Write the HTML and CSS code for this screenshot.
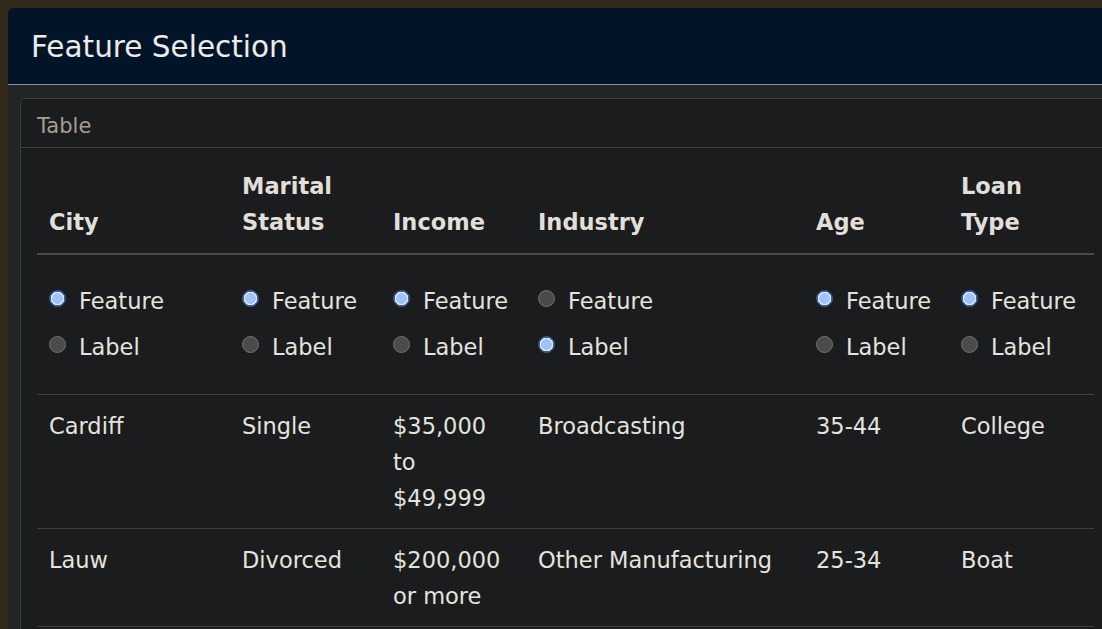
FILE: index.html
```html
<!DOCTYPE html>
<html lang="en">
<head>
<meta charset="utf-8">
<title>Feature Selection</title>
<link rel="stylesheet" href="styles.css">
</head>
<body>
<div class="panel">
  <div class="panel-header"><h1 class="panel-title">Feature Selection</h1></div>
  <div class="panel-body">
    <div class="card">
      <div class="card-header">Table</div>
      <div class="card-body">
        <table class="data-table">
          <colgroup>
            <col class="c-city"><col class="c-marital"><col class="c-income"><col class="c-industry"><col class="c-age"><col class="c-loan">
          </colgroup>
          <thead>
            <tr><th>City</th><th>Marital Status</th><th>Income</th><th>Industry</th><th>Age</th><th>Loan Type</th></tr>
          </thead>
          <tbody>
            <tr class="radio-row">
              <td><div class="opts"><label class="opt"><input type="radio" name="city" checked><span>Feature</span></label><label class="opt"><input type="radio" name="city"><span>Label</span></label></div></td>
              <td><div class="opts"><label class="opt"><input type="radio" name="marital" checked><span>Feature</span></label><label class="opt"><input type="radio" name="marital"><span>Label</span></label></div></td>
              <td><div class="opts"><label class="opt"><input type="radio" name="income" checked><span>Feature</span></label><label class="opt"><input type="radio" name="income"><span>Label</span></label></div></td>
              <td><div class="opts"><label class="opt"><input type="radio" name="industry"><span>Feature</span></label><label class="opt"><input type="radio" name="industry" checked><span>Label</span></label></div></td>
              <td><div class="opts"><label class="opt"><input type="radio" name="age" checked><span>Feature</span></label><label class="opt"><input type="radio" name="age"><span>Label</span></label></div></td>
              <td><div class="opts"><label class="opt"><input type="radio" name="loan" checked><span>Feature</span></label><label class="opt"><input type="radio" name="loan"><span>Label</span></label></div></td>
            </tr>
            <tr>
              <td>Cardiff</td><td>Single</td><td>$35,000 to $49,999</td><td>Broadcasting</td><td>35-44</td><td>College</td>
            </tr>
            <tr>
              <td>Lauw</td><td>Divorced</td><td>$200,000 or more</td><td>Other Manufacturing</td><td>25-34</td><td>Boat</td>
            </tr>
          </tbody>
        </table>
      </div>
    </div>
  </div>
</div>
</body>
</html>
```

FILE: styles.css
```css
html, body {
  margin: 0;
  padding: 0;
}
body {
  background: #33291a;
  overflow: hidden;
  height: 629px;
  padding: 8px 0 0 8px;
  box-sizing: border-box;
  font-family: "DejaVu Sans", "Noto Sans", sans-serif;
  color: #e6e3de;
}
.panel {
  width: 1130px;
  background: #222526;
  border-radius: 6px 6px 0 0;
  overflow: hidden;
  min-height: 700px;
}
.panel-header {
  height: 76px;
  background: #021428;
  border-bottom: 1px solid #8e8e8e;
  display: flex;
  align-items: center;
  padding: 0 23px;
}
.panel-title {
  margin: 0;
  font-size: 29.5px;
  font-weight: 400;
  color: #ecebe8;
  line-height: 1;
  padding-top: 3px;
}
.panel-body {
  padding: 13px 12px;
}
.card {
  width: 1100px;
  border: 1px solid #3a3d3f;
  border-radius: 5px;
  background: #1b1c1d;
}
.card-header {
  height: 49px;
  box-sizing: border-box;
  border-bottom: 1px solid #3d4042;
  display: flex;
  align-items: center;
  padding: 5px 16px 0;
  font-size: 21px;
  color: #a59e92;
}
.card-body {
  padding: 8px 16px;
}
.data-table {
  width: 1057px;
  border-collapse: collapse;
  table-layout: fixed;
  font-size: 22.5px;
  line-height: 36px;
}
.c-city { width: 193px; }
.c-marital { width: 151px; }
.c-income { width: 145px; }
.c-industry { width: 278px; }
.c-age { width: 145px; }
.c-loan { width: 145px; }
.data-table th,
.data-table td {
  padding: 12px;
  text-align: left;
  vertical-align: top;
}
.data-table td {
  padding: 13px 12px 12px;
  border-bottom: 1px solid #3d4042;
}
.data-table th {
  vertical-align: bottom;
  font-weight: 700;
  color: #e2dfda;
  padding-bottom: 13px;
  border-bottom: 2px solid #48494b;
}
.data-table .radio-row td {
  padding: 12px;
}
.opts {
  display: flex;
  flex-direction: column;
  gap: 10px;
  padding: 16px 0 17px;
}
.opt {
  display: flex;
  align-items: center;
  gap: 13px;
  height: 36px;
  white-space: nowrap;
}
.opt input {
  appearance: none;
  -webkit-appearance: none;
  margin: -5px 0 0 0;
  width: 17px;
  height: 17px;
  border-radius: 50%;
  border: 1px solid #727272;
  background: #4b4b4b;
  flex: none;
}
.opt input:checked {
  border: 1px solid #3b5c8f;
  background: radial-gradient(circle, #9fc4fb 0 5.2px, #dce9fd 5.6px 6.6px, #3b5c8f 7px);
}
```
